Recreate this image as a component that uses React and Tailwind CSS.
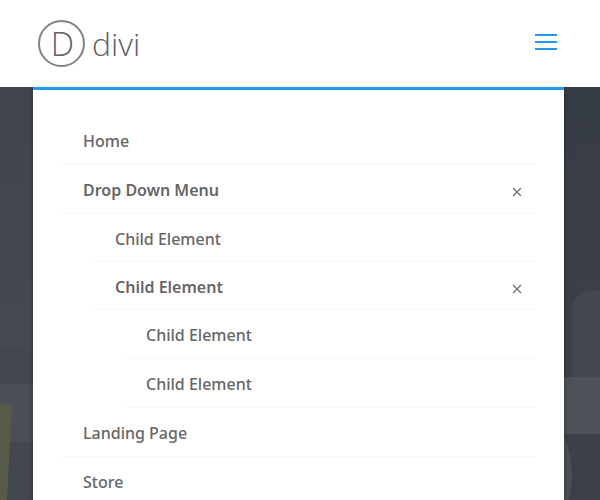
import React, { useState } from "react";
import clsx from "clsx";

const menu = [
  { label: "Home" },
  {
    label: "Drop Down Menu",
    children: [
      { label: "Child Element" },
      {
        label: "Child Element",
        children: [{ label: "Child Element" }, { label: "Child Element" }],
      },
    ],
  },
  { label: "Landing Page" },
  { label: "Store" },
];

// row spacing per nesting level
const rowStyles = [
  "h-[49px] pl-6",
  "h-[48px] ml-[34px] pl-[22px]",
  "h-[49px] ml-[67px] pl-[20px]",
];

const Logo = () => (
  <a
    href="#"
    className="flex items-center gap-[7px] font-['Open_Sans',sans-serif] font-light text-[#606264]"
  >
    <span className="flex size-[47px] items-center justify-center rounded-full border-2 border-[#808284] pl-0.5 text-[33px] leading-none">
      D
    </span>
    <span className="text-[32px] leading-none">divi</span>
  </a>
);

const MenuItem = ({ item, level }) => {
  const [open, setOpen] = useState(true);

  return (
    <li>
      <div
        className={clsx(
          "flex items-center justify-between border-b border-[#f8f8f8] pr-[15px] pt-0.5",
          rowStyles[level]
        )}
      >
        <a href="#" className={item.children ? "font-semibold" : "font-medium"}>
          {item.label}
        </a>
        {item.children && (
          <button
            type="button"
            aria-label="Toggle submenu"
            aria-expanded={open}
            onClick={() => setOpen(!open)}
            className="pt-1"
          >
            <svg width="10" height="10" viewBox="0 0 10 10" stroke="#707274" strokeWidth="1.4">
              <path d="M1 1l8 8M9 1l-8 8" />
            </svg>
          </button>
        )}
      </div>
      {item.children && open && (
        <ul>
          {item.children.map((child, index) => (
            <MenuItem key={index} item={child} level={level + 1} />
          ))}
        </ul>
      )}
    </li>
  );
};

// Dim office scene behind the menu
const Backdrop = () => (
  <svg
    className="absolute inset-0 size-full"
    viewBox="0 0 600 413"
    preserveAspectRatio="none"
    aria-hidden="true"
  >
    <defs>
      <linearGradient id="wallLeft" x1="0" y1="0" x2="0" y2="1">
        <stop offset="0" stopColor="#40454e" />
        <stop offset="0.6" stopColor="#454950" />
        <stop offset="1" stopColor="#42464e" />
      </linearGradient>
      <linearGradient id="wallRight" x1="0" y1="0" x2="0" y2="1">
        <stop offset="0" stopColor="#363c45" />
        <stop offset="0.5" stopColor="#3b4048" />
        <stop offset="1" stopColor="#3c4149" />
      </linearGradient>
    </defs>
    <rect width="300" height="413" fill="url(#wallLeft)" />
    <rect x="300" width="300" height="413" fill="url(#wallRight)" />
    <rect y="263" width="34" height="34" fill="#42464e" />
    <path d="M572 290V221q0-18 28-18v87z" fill="#424750" />
    <rect y="297" width="300" height="58" fill="#4b4f56" />
    <rect x="300" y="290" width="300" height="57" fill="#4d5158" />
    <path d="M564 347q8 22 8 46l-3 20h-5z" fill="#4a4f57" />
    <path d="M0 316l12 2-5 95H0z" fill="#565a47" />
  </svg>
);

const App = () => {
  return (
    <div className="flex h-screen flex-col overflow-hidden bg-white font-['Noto_Sans',sans-serif] text-[#666666]">
      <header className="flex h-[87px] shrink-0 items-center justify-between pl-[38px] pr-[43px]">
        <Logo />
        <button type="button" aria-label="Menu" className="flex w-[22px] flex-col gap-[5px] pb-1">
          <span className="h-[2px] bg-[#1f9bf5]" />
          <span className="h-[2px] bg-[#1f9bf5]" />
          <span className="h-[2px] bg-[#1f9bf5]" />
        </button>
      </header>

      <main className="relative min-h-0 flex-1 pl-[33px] pr-[36px]">
        <Backdrop />
        <nav className="relative h-full overflow-hidden border-t-[3px] border-[#1f9bf5] bg-white py-[26px] pl-[26px] pr-[27px] text-base shadow-[0_2px_5px_rgba(0,0,0,0.3)]">
          <ul>
            {menu.map((item, index) => (
              <MenuItem key={index} item={item} level={0} />
            ))}
          </ul>
        </nav>
      </main>
    </div>
  );
};

export default App;
